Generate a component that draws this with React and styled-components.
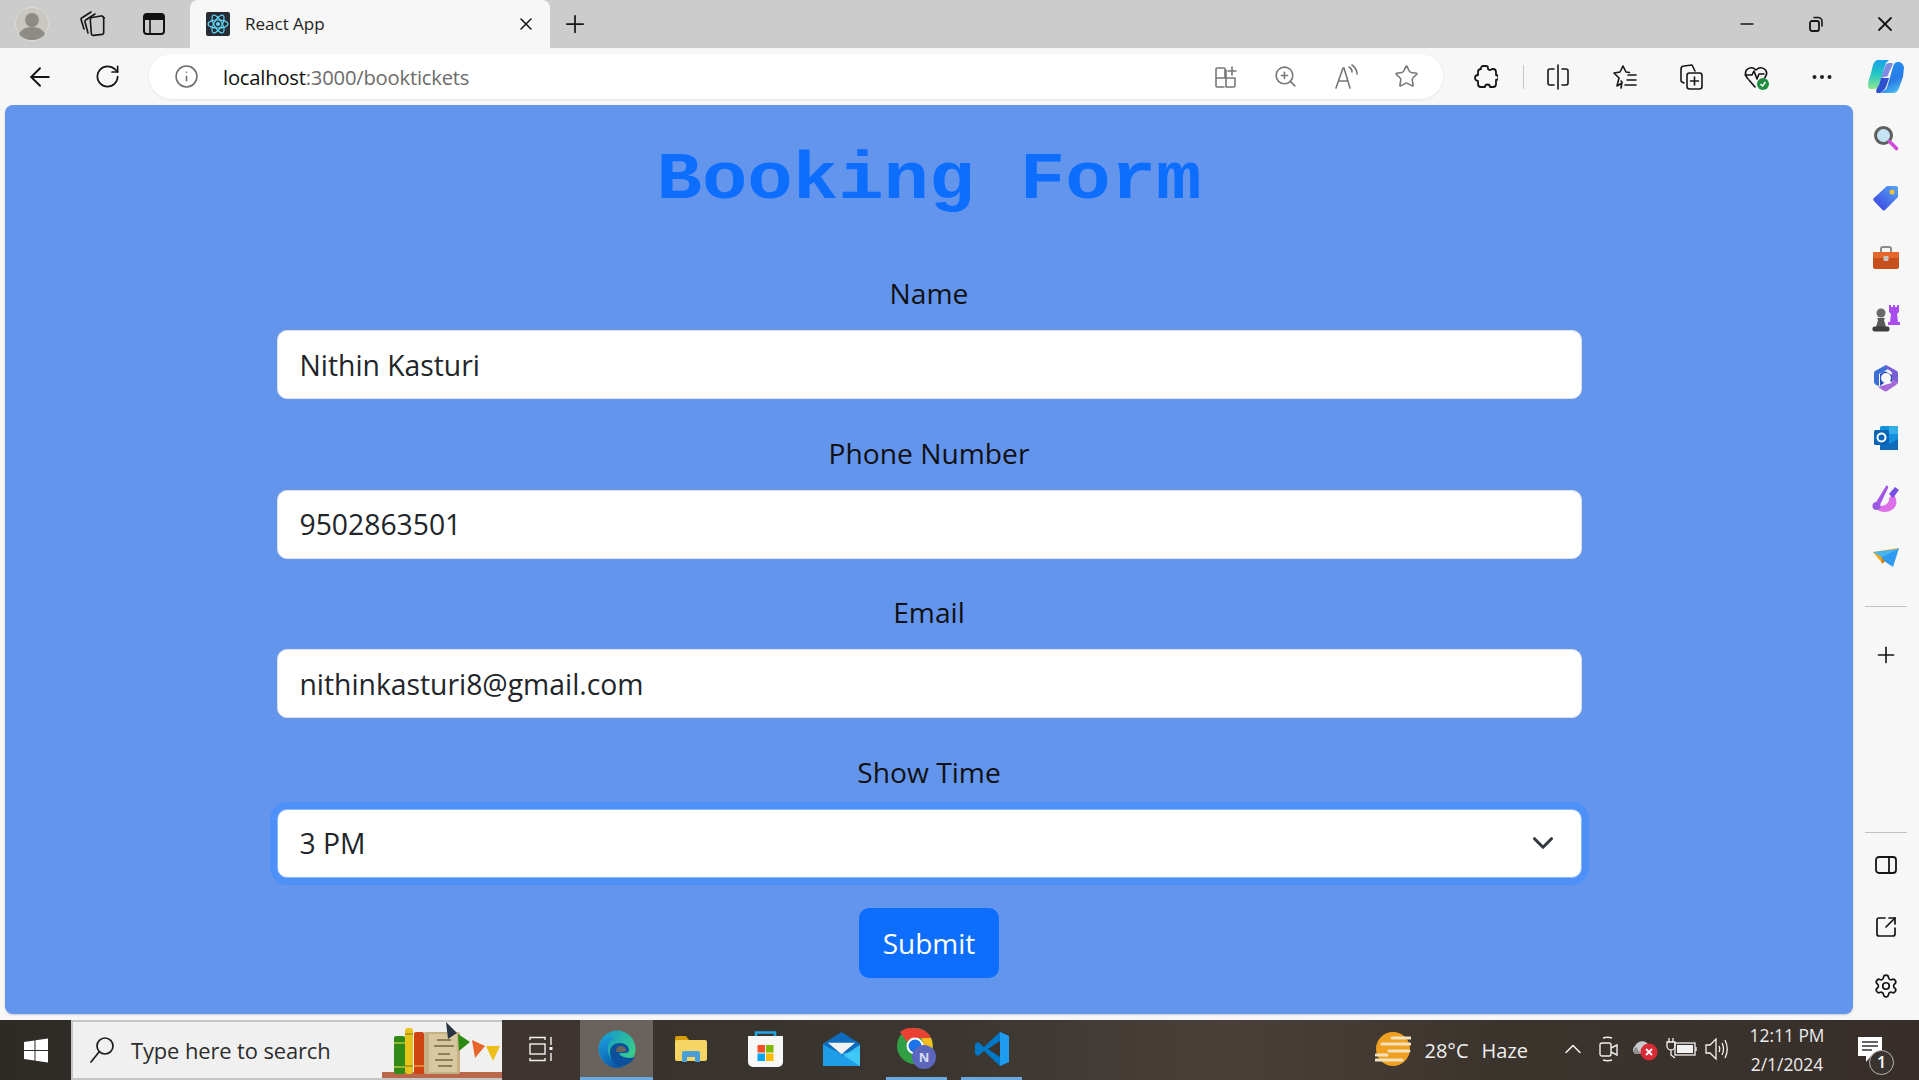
import React from 'react'
import styled, { createGlobalStyle } from 'styled-components'
import {
  ArrowLeft, RotateCw, Info, Plus, X, Minus, ZoomIn, Star, Settings, ChevronUp,
  ChevronDown, SquareArrowOutUpRight,
} from 'lucide-react'

const UI_FONT = '"Open Sans", "Noto Sans", "Liberation Sans", sans-serif'

const GlobalStyle = createGlobalStyle`
  html, body {
    margin: 0;
    padding: 0;
    background: #f7f7f7;
  }
  * {
    box-sizing: border-box;
  }
`

const Screen = styled.div`
  width: 1919px;
  height: 1080px;
  display: flex;
  flex-direction: column;
  overflow: hidden;
  font-family: ${UI_FONT};
`

const TabStrip = styled.div`
  height: 48px;
  flex: none;
  display: flex;
  align-items: stretch;
  background: #cccccc;
`

const Slot = styled.div`
  width: ${props => props.$w}px;
  flex: none;
  display: flex;
  align-items: center;
  justify-content: center;
  color: ${props => props.$color || '#161616'};
  margin-left: ${props => props.$ml || 0}px;
`

const Spacer = styled.div`
  flex: 1;
`

const Tab = styled.div`
  width: 360px;
  margin-left: 2px;
  flex: none;
  display: flex;
  align-items: center;
  background: #f7f7f7;
  border-radius: 8px 8px 0 0;
  padding: 0 14px 0 16px;
`

const TabTitle = styled.span`
  flex: 1;
  margin: 0 0 2px 15px;
  font-size: 17px;
  color: #222;
`

const Toolbar = styled.div`
  height: 57px;
  flex: none;
  display: flex;
  align-items: center;
  background: #f7f7f7;
`

const AddressBar = styled.div`
  width: 1294px;
  height: 45px;
  margin-left: 15px;
  flex: none;
  display: flex;
  align-items: center;
  background: #fff;
  border-radius: 23px;
  box-shadow: 0 1px 3px rgba(0, 0, 0, 0.08);
`

const Url = styled.span`
  font-size: 20.2px;
  color: #6b6b6b;
  letter-spacing: -0.2px;
  & > b {
    font-weight: 400;
    color: #111;
  }
`

const ToolbarRule = styled.div`
  width: 1px;
  height: 24px;
  margin-left: 7px;
  background: #c4c4c4;
`

const Body = styled.div`
  flex: 1;
  min-height: 0;
  display: flex;
  background: #f7f7f7;
`

const Page = styled.main`
  width: 1848px;
  margin: 0 0 6px 5px;
  flex: none;
  background: #6495ed;
  border-radius: 8px;
  box-shadow: 0 1px 2px rgba(0, 0, 0, 0.18);
  display: flex;
  flex-direction: column;
  align-items: center;
  padding-top: 27px;
`

const Title = styled.h1`
  margin: 0 0 48px;
  height: 92px;
  font-family: "Liberation Mono", "Courier New", monospace;
  font-size: 75.7px;
  line-height: 92px;
  font-weight: 700;
  color: #0d6efd;
  transform: scaleY(0.87);
  transform-origin: center 67px;
`

const Form = styled.form`
  width: 1305px;
  display: flex;
  flex-direction: column;
  align-items: center;
`

const Field = styled.div`
  width: 100%;
  margin-bottom: ${props => props.$mb || 32.5}px;
  position: relative;
`

const Label = styled.label`
  display: block;
  height: 43px;
  margin-bottom: 15px;
  font-size: 28.2px;
  line-height: 43px;
  text-align: center;
  color: #111;
`

const TextInput = styled.input`
  display: block;
  width: 100%;
  height: 69px;
  padding: 0 22px;
  border: 1px solid #dee2e6;
  border-radius: 10px;
  background: #fff;
  font-family: ${UI_FONT};
  font-size: 28.3px;
  color: #212529;
  outline: none;
`

const Select = styled.select`
  display: block;
  width: 100%;
  height: 69px;
  padding: 0 22px;
  border: 1px solid #86b7fe;
  border-radius: 10px;
  background: #fff;
  font-family: ${UI_FONT};
  font-size: 28.3px;
  color: #212529;
  appearance: none;
  outline: none;
  box-shadow: 0 0 0 7px #4d90f8;
`

const SelectArrow = styled(ChevronDown)`
  position: absolute;
  right: 22px;
  bottom: 18px;
  color: #343a40;
  pointer-events: none;
`

const SubmitButton = styled.button`
  width: 140px;
  height: 70px;
  border: none;
  border-radius: 10px;
  background: #0d6efd;
  color: #fff;
  font-family: ${UI_FONT};
  font-size: 28px;
`

const SideBar = styled.aside`
  flex: 1;
  display: flex;
  flex-direction: column;
  align-items: center;
  padding: 3px 0 5px;
`

const SideSlot = styled.div`
  width: 100%;
  height: ${props => props.$h || 60}px;
  flex: none;
  display: flex;
  align-items: center;
  justify-content: center;
  color: #161616;
`

const SideRule = styled.div`
  width: 42px;
  height: 1px;
  flex: none;
  background: #c2c2c2;
  margin: ${props => props.$m || '0'};
`

const Taskbar = styled.footer`
  height: 60px;
  flex: none;
  display: flex;
  align-items: stretch;
  padding-right: 21px;
  color: #f0f0f0;
  background: linear-gradient(90deg, #2e2b27 0, #38322d 30%, #3c3631 50%, #4a4039 64%, #3b342d 78%, #372e29 100%);
`

const StartButton = styled.div`
  width: 71px;
  flex: none;
  display: flex;
  align-items: center;
  justify-content: center;
`

const SearchBox = styled.div`
  width: 431px;
  flex: none;
  display: flex;
  align-items: center;
  background: #f0f0f0;
  border: 2px solid #c6c6c6;
  border-right: none;
  padding-left: 16px;
  overflow: hidden;
`

const SearchText = styled.span`
  margin-left: 16px;
  font-size: 21.9px;
  color: #2c2c2c;
  letter-spacing: -0.1px;
`

const Artwork = styled.svg`
  margin-left: auto;
  flex: none;
`

const TaskSlot = styled.div`
  width: ${props => props.$w || 75}px;
  margin-left: ${props => props.$ml || 0}px;
  flex: none;
  display: flex;
  align-items: center;
  justify-content: center;
  background: ${props => (props.$active ? '#6a625d' : props.$tint || 'transparent')};
  border-bottom: 3px solid ${props => (props.$open || props.$active ? '#6aa9e0' : 'transparent')};
`

const Weather = styled.span`
  font-size: 20px;
  margin-left: ${props => props.$ml || 0}px;
  white-space: nowrap;
  align-self: center;
`

const Clock = styled.div`
  width: 92px;
  margin-left: 6px;
  flex: none;
  display: flex;
  flex-direction: column;
  align-items: center;
  justify-content: center;
  font-size: 17.4px;
  line-height: 29px;
  color: #ececec;
  white-space: nowrap;
`

const Notify = styled.div`
  width: 56px;
  margin-left: 9px;
  position: relative;
  display: flex;
  align-items: center;
  justify-content: center;
`

const NotifyBadge = styled.span`
  position: absolute;
  left: 27px;
  top: 30px;
  width: 25px;
  height: 25px;
  border-radius: 50%;
  border: 1.5px solid #b5b5b5;
  background: #3a3430;
  color: #fff;
  font-size: 16px;
  font-weight: 600;
  line-height: 22px;
  text-align: center;
`

const line = { fill: 'none', stroke: 'currentColor', strokeWidth: 1.6, strokeLinecap: 'round', strokeLinejoin: 'round' }

const Avatar = () => (
  <svg width="34" height="34" viewBox="0 0 34 34">
    <circle cx="17" cy="17" r="16.5" fill="#c9c7c2" stroke="#dcdad6" />
    <circle cx="17" cy="13" r="7" fill="#8d8b86" />
    <path d="M4 27c3-6 8-7 13-7s10 1 13 7c-3 4-8 6-13 6s-10-2-13-6z" fill="#8d8b86" />
  </svg>
)

const TabsStack = () => (
  <svg width="26" height="28" viewBox="0 0 26 28" {...line}>
    <path d="M13 7.500l9-1.500a2 2 0 0 1 2.300 1.700l1.500 0M13 7.500a2 2 0 0 0-1.700 2l1 14a2 2 0 0 0 2.200 1.900l8.500-1a2 2 0 0 0 1.700-2.200V8a2 2 0 0 0-2.200-2" />
    <path d="M9 23L6 12a2 2 0 0 1 1.500-2.500L16 4" />
    <path d="M5 19L2.200 10a2 2 0 0 1 1.300-2.500L12 2" />
  </svg>
)

const VerticalTabs = () => (
  <svg width="24" height="24" viewBox="0 0 24 24">
    <rect x="2" y="2" width="20" height="20" rx="3" fill="none" stroke="#111" strokeWidth="2" />
    <path d="M2 5a3 3 0 0 1 3-3h14a3 3 0 0 1 3 3v3H2z" fill="#111" />
    <path d="M8 8v14" stroke="#111" strokeWidth="1.6" />
  </svg>
)

const ReactFavicon = () => (
  <svg width="24" height="24" viewBox="0 0 24 24">
    <rect width="24" height="24" rx="2" fill="#282c34" />
    <g fill="none" stroke="#61dafb" strokeWidth="1.2">
      <ellipse cx="12" cy="12" rx="10" ry="4" />
      <ellipse cx="12" cy="12" rx="10" ry="4" transform="rotate(60 12 12)" />
      <ellipse cx="12" cy="12" rx="10" ry="4" transform="rotate(120 12 12)" />
    </g>
    <circle cx="12" cy="12" r="2" fill="#61dafb" />
  </svg>
)

const RestoreIcon = () => (
  <svg width="16" height="18" viewBox="0 0 16 18" {...line}>
    <rect x="2" y="6" width="9" height="10" rx="2" strokeWidth="1.8" />
    <path d="M6 2.500h4a4 4 0 0 1 4 4V11" />
  </svg>
)

const AppsAdd = () => (
  <svg width="24" height="24" viewBox="0 0 24 24" {...line} stroke="#777">
    <path d="M13 5v17h8a1 1 0 0 0 1-1v-8H3M11 22H4a1 1 0 0 1-1-1V4a1 1 0 0 1 1-1h7a1 1 0 0 1 1 1v9" />
    <path d="M19 2v8M15 6h8" />
  </svg>
)

const ReadAloud = () => (
  <svg width="26" height="26" viewBox="0 0 26 26" {...line} stroke="#777">
    <path d="M3 24l7-20h1l6 20M6 17h9" />
    <path d="M16 3c2 1 3 3 3 5M19 1c3 2 5 5 5 9" />
  </svg>
)

const ExtensionIcon = () => (
  <svg width="24" height="26" viewBox="0 0 24 26" {...line} strokeWidth="1.8">
    <path d="M9 2h3a2 2 0 0 1 2 2v1a2.500 2.500 0 0 0 4 0h1a3 3 0 0 1 3 3v3a2.500 2.500 0 1 1 0 5v4a3 3 0 0 1-3 3h-3a2.500 2.500 0 0 0-5 0H7a3 3 0 0 1-3-3v-3a3 3 0 0 1 0-6V8a3 3 0 0 1 3-3a2.500 2.500 0 0 1 2-3z" />
  </svg>
)

const SplitIcon = () => (
  <svg width="24" height="26" viewBox="0 0 24 26" {...line}>
    <path d="M8 5H4a2 2 0 0 0-2 2v12a2 2 0 0 0 2 2h4M16 5h4a2 2 0 0 1 2 2v12a2 2 0 0 1-2 2h-4" />
    <path d="M12 1v24" />
  </svg>
)

const FavoritesIcon = () => (
  <svg width="26" height="26" viewBox="0 0 26 26" {...line}>
    <path d="M11 2l3 6 3.500.5M9 24l1-6-1-1M11 2L8 8l-6 1 5 5-2 8 5-3" />
    <path d="M16 11h8M15 16h9M13 21h11" />
  </svg>
)

const CollectionsIcon = () => (
  <svg width="26" height="28" viewBox="0 0 26 28" {...line}>
    <rect x="9" y="10" width="15" height="16" rx="2.500" />
    <path d="M16.500 14v8M12.500 18h8" />
    <path d="M6 20l-2-1a2 2 0 0 1-1-2V6a3 3 0 0 1 3-3l8-1 3 6" />
  </svg>
)

const HealthIcon = () => (
  <svg width="28" height="28" viewBox="0 0 28 28">
    <path d="M5 16C2 13 2 9 3.500 7c2.500-3 6.500-3 9.500 0 3-3 7-3 9.500 0 1.500 2 1.500 5-1 8M2 12h7l2-4 3 8 2-5h5M6 17l6 7" fill="none" stroke="#111" strokeWidth="1.6" strokeLinejoin="round" strokeLinecap="round" />
    <circle cx="20" cy="21" r="6" fill="#1e8e3e" />
    <path d="M17.500 21l2 2 3-4" fill="none" stroke="#fff" strokeWidth="1.5" />
  </svg>
)

const MoreIcon = () => (
  <svg width="22" height="6" viewBox="0 0 22 6" fill="#222">
    <circle cx="3.500" cy="3" r="2" />
    <circle cx="11" cy="3" r="2" />
    <circle cx="18.500" cy="3" r="2" />
  </svg>
)

const Copilot = () => (
  <svg width="36" height="33" viewBox="0 0 36 33">
    <defs>
      <linearGradient id="copA" x1="0.300" y1="0" x2="0.300" y2="1">
        <stop offset="0" stopColor="#1aa0ea" />
        <stop offset="0.5" stopColor="#25c8c4" />
        <stop offset="1" stopColor="#90e48e" />
      </linearGradient>
      <linearGradient id="copB" x1="0.300" y1="0" x2="0.700" y2="1">
        <stop offset="0" stopColor="#1f90ee" />
        <stop offset="0.6" stopColor="#2a7be6" />
        <stop offset="1" stopColor="#4cc0f4" />
      </linearGradient>
    </defs>
    <path d="M10 0h11l-3 3-7 22c-1 3-3 4-6 4H3c-2 0-3-1-3-4 0-4 2-8 3-12l2-8c1-3 3-5 5-5z" fill="url(#copA)" />
    <path d="M25 33H12l5-3c2-2 2-3 3-6l5-17c1-4 3-5 5-5h1c2 0 4 2 5 5l-1 10-4 11c-1 3-3 5-6 5z" fill="url(#copB)" />
    <path d="M11 25l2-7h8l-2 6c-1 3-2 5-3 6l-4 3h-3c-2-2 0-5 2-8z" fill="#2f50cf" />
    <path d="M21 3h3c1 0 1 1 0 3-1 3-3 5-4 10l-7 2 4-11c1-3 2-4 4-4z" fill="#5f6fe0" opacity="0.8" />
  </svg>
)

const SideSearch = () => (
  <svg width="26" height="26" viewBox="0 0 26 26">
    <circle cx="10.500" cy="10.500" r="8" fill="#c4e4f6" stroke="#5f5f5f" strokeWidth="3" />
    <path d="M16.500 16.500l7 7" stroke="#d14ad6" strokeWidth="3.600" strokeLinecap="round" />
  </svg>
)

const SideTag = () => (
  <svg width="26" height="26" viewBox="0 0 26 26">
    <defs>
      <linearGradient id="tagG" x1="1" y1="0" x2="0" y2="1">
        <stop offset="0" stopColor="#55a5f5" />
        <stop offset="1" stopColor="#3a3fe0" />
      </linearGradient>
    </defs>
    <path d="M14 1h9a2 2 0 0 1 2 2v9L12 25a2 2 0 0 1-2.500 0L1 16a2 2 0 0 1 0-3z" fill="url(#tagG)" />
    <circle cx="19" cy="7" r="2.500" fill="#f4c430" />
  </svg>
)

const SideToolbox = () => (
  <svg width="28" height="24" viewBox="0 0 28 24">
    <path d="M9 7V3a2 2 0 0 1 2-2h6a2 2 0 0 1 2 2v4" fill="none" stroke="#8a8a8a" strokeWidth="2" />
    <rect x="1" y="6" width="26" height="17" rx="2" fill="#c8501f" />
    <rect x="1" y="6" width="26" height="6" rx="1" fill="#e2672a" />
    <rect x="11.500" y="10" width="5" height="5" rx="1" fill="#c9c2bc" />
  </svg>
)

const SideChess = () => (
  <svg width="28" height="28" viewBox="0 0 28 28">
    <path d="M17 1h2v2h2V1h2v2h2V1h2v7l-2 2 1 8h2v3H16v-3h2l1-8-2-2z" fill="#a94df0" />
    <circle cx="9" cy="9" r="4.500" fill="#6a6a6a" />
    <path d="M5 14h8l-1 2 2 7H4l2-7z" fill="#5a5a5a" />
    <rect x="0.500" y="22.500" width="17" height="5" rx="2" fill="#3e3e3e" />
  </svg>
)

const SideM365 = () => (
  <svg width="26" height="28" viewBox="0 0 26 28">
    <path d="M13 1L2 7c-1 1-1 2-1 3v8c0 1 1 2 2 3l3 1V10l11-6z" fill="#3b6fd6" />
    <path d="M13 1l11 6c1 1 1 2 1 3v9l-6 3V10c0-2-1-3-3-4l-3-2z" fill="#7a5cd6" />
    <path d="M25 18c0 1-1 2-2 3l-9 6c-1 .500-2 .500-3 0l-6-4 10-3c2 0 3-1 4-2v-3z" fill="#a66ad8" />
    <path d="M7 22V10l3-2c2-1 4 0 5 1l4 2v7l-4-2v-3l-2-1-2 1v6z" fill="#2b4fb8" />
    <circle cx="13" cy="14" r="5" fill="#f7f7f7" />
  </svg>
)

const SideOutlook = () => (
  <svg width="26" height="26" viewBox="0 0 26 26">
    <rect x="7" y="1" width="18" height="24" rx="1.500" fill="#1490df" />
    <path d="M16 1h9v8h-9z" fill="#33aee8" />
    <path d="M7 14l9 5 9-5v11H7z" fill="#0f6cbd" />
    <rect x="1" y="5" width="15" height="15" rx="1.500" fill="#0a64b8" />
    <circle cx="8.500" cy="12.500" r="4" fill="none" stroke="#fff" strokeWidth="2" />
  </svg>
)

const SideDesigner = () => (
  <svg width="28" height="30" viewBox="0 0 28 30">
    <path d="M3 24c4 7 17 7 21-2 1-4 0-8-3-11l-4 4c1 5-4 8-9 8z" fill="#dd70e8" />
    <path d="M3 21L14 3c1-1 3 0 2 2L7 24z" fill="#a257e8" />
    <circle cx="4.500" cy="23" r="4" fill="#9a5be0" />
    <path d="M17 11l6-7 4 3-6 8z" fill="#7a4fe6" />
  </svg>
)

const SideSend = () => (
  <svg width="28" height="20" viewBox="0 0 28 20">
    <path d="M1 4L27 0 9 9l1 6z" fill="#f0a818" />
    <path d="M27 0L9 9l3 4 9 6z" fill="#2f9bf0" />
    <path d="M1 4l9 5 16-8z" fill="#46b4f5" />
    <path d="M9 9l1 7 3-3z" fill="#c57a10" />
  </svg>
)

const SidePanel = () => (
  <svg width="24" height="20" viewBox="0 0 24 20" {...line} strokeWidth="1.8">
    <rect x="2" y="2" width="20" height="16" rx="3" />
    <path d="M15 2v16" />
  </svg>
)

const StartLogo = () => (
  <svg width="24" height="25" viewBox="0 0 24 25" fill="#fff">
    <path d="M0 4l10.500-1.500v9.500H0zM11.500 2.300L24 .5V12H11.500zM0 13h10.500v9.500L0 21zM11.500 13H24v11.500l-12.500-1.800z" />
  </svg>
)

const SearchGlass = () => (
  <svg width="26" height="28" viewBox="0 0 26 28" fill="none" stroke="#1c1c1c" strokeWidth="1.700">
    <circle cx="16" cy="10" r="8" />
    <path d="M10 16L2 26" strokeLinecap="round" />
  </svg>
)

const Bookshelf = () => (
  <Artwork width="120" height="56" viewBox="0 0 120 56">
    <rect x="0" y="50" width="120" height="6" fill="#b9694a" />
    <rect x="12" y="14" width="11" height="38" rx="2" fill="#2f8a16" />
    <path d="M12 21h11M12 45h11" stroke="#b8c83a" strokeWidth="1.500" />
    <rect x="23" y="6" width="8" height="46" rx="3" fill="#e8c41a" />
    <path d="M23 12h8M23 44h8" stroke="#a88c10" strokeWidth="1.500" />
    <rect x="32" y="10" width="10" height="42" rx="2" fill="#cf4212" />
    <path d="M32 44h10" stroke="#e8a040" strokeWidth="1.500" />
    <rect x="42" y="10" width="36" height="42" rx="2" fill="#c7b083" />
    <rect x="47" y="12" width="28" height="38" fill="#d9c79f" />
    <path d="M55 18h14M52 24h20M56 32h12M53 38h18M56 44h14" stroke="#8f7c59" strokeWidth="2" />
    <path d="M64 0l11 11-9 6z" fill="#2a3440" />
    <path d="M76 12l12 8-11 9z" fill="#2c8a12" />
    <path d="M90 18l13 6-10 12z" fill="#e8652a" />
    <path d="M104 24h14l-7 15z" fill="#ecc018" />
  </Artwork>
)

const TaskView = () => (
  <svg width="24" height="26" viewBox="0 0 24 26" fill="none" stroke="#f2f2f2" strokeWidth="1.400">
    <path d="M1 4V1.500h15V4M1 22v2.500h15V22" />
    <rect x="1" y="8" width="15" height="10" />
    <path d="M22 1v8M22 17v8" />
    <rect x="20.500" y="11" width="3" height="3" fill="#f2f2f2" stroke="none" />
  </svg>
)

const EdgeIcon = () => (
  <svg width="38" height="38" viewBox="0 0 38 38">
    <defs>
      <linearGradient id="edgeA" x1="0" y1="0" x2="1" y2="0.600">
        <stop offset="0" stopColor="#0f8fd8" />
        <stop offset="1" stopColor="#38d08a" />
      </linearGradient>
      <linearGradient id="edgeB" x1="0" y1="0" x2="0.500" y2="1">
        <stop offset="0" stopColor="#1a9ee0" />
        <stop offset="1" stopColor="#0b5aa8" />
      </linearGradient>
    </defs>
    <circle cx="19" cy="19" r="18.500" fill="url(#edgeA)" />
    <path d="M1 18C2 10 10 6 17 8c-7 2-9 9-6 17 2 6 9 11 17 10-3 2-6 3-9 3C9 38 1 29 1 18z" fill="url(#edgeB)" />
    <path d="M12 22c0-6 5-9 10-9 6 0 9 4 9 7 0 3-3 3-6 3h-3c-1 0-1 1 0 2 2 2 6 3 10 3l5-1c-3 5-8 9-14 9-7 0-11-7-11-14z" fill="#0c4f9a" />
    <path d="M18 21c0-3 2-5 5-5s5 2 5 4-2 2-3 2h-5c-1 0-2 0-2-1z" fill="#6a625d" />
  </svg>
)

const FolderIcon = () => (
  <svg width="32" height="28" viewBox="0 0 32 28">
    <path d="M0 3a2 2 0 0 1 2-2h9l3 4v5H0z" fill="#d79b08" />
    <rect x="0" y="5" width="32" height="21" rx="2" fill="#f7d565" />
    <path d="M7 27V18a2 2 0 0 1 2-2h14a2 2 0 0 1 2 2v9h-5v-5h-8v5z" fill="#4a9ed8" />
  </svg>
)

const StoreIcon = () => (
  <svg width="35" height="36" viewBox="0 0 35 36">
    <path d="M8 6V1.500h19V6" fill="none" stroke="#1ea7e8" strokeWidth="2.500" />
    <path d="M0 5h35v26a5 5 0 0 1-5 5H5a5 5 0 0 1-5-5z" fill="#f7f7f7" />
    <rect x="9.500" y="14" width="7.500" height="7.500" fill="#f25022" />
    <rect x="18" y="14" width="7.500" height="7.500" fill="#7fba00" />
    <rect x="9.500" y="22.500" width="7.500" height="7.500" fill="#00a4ef" />
    <rect x="18" y="22.500" width="7.500" height="7.500" fill="#ffb900" />
  </svg>
)

const MailIcon = () => (
  <svg width="37" height="34" viewBox="0 0 38 35">
    <path d="M0 12L19 0l19 12v2L19 26 0 14z" fill="#0f6cbd" />
    <path d="M5 11h28l-14 12z" fill="#f2f2f2" />
    <path d="M0 13l19 13 19-13v22H0z" fill="#37c0f5" />
    <path d="M0 13v22h38L19 23z" fill="#1e9ee8" />
    <path d="M19 22l19 13V20z" fill="#45cdf8" opacity="0.7" />
  </svg>
)

const ChromeIcon = () => (
  <svg width="40" height="42" viewBox="0 0 40 42">
    <circle cx="18" cy="18" r="18" fill="#2f9e44" />
    <path d="M18 0a18 18 0 0 1 16 10H18a8 8 0 0 0-8 4L3 4a18 18 0 0 1 15-4z" fill="#e94235" />
    <path d="M34 10a18 18 0 0 1-9 24l-7-11a8 8 0 0 0 6-13z" fill="#f6bd20" />
    <circle cx="18" cy="18" r="8.500" fill="#fff" />
    <circle cx="18" cy="18" r="6.500" fill="#1a73e8" />
    <circle cx="27" cy="29" r="12" fill="#5a67bd" />
    <text x="27" y="34" textAnchor="middle" fontSize="13" fontWeight="700" fontFamily="Open Sans, sans-serif" fill="#d9dcf2">N</text>
  </svg>
)

const VsCodeIcon = () => (
  <svg width="36" height="36" viewBox="0 0 36 36">
    <path d="M26 1l9 4v26l-9 4L10 20 4 25l-3-2v-10l3-2 6 5z" fill="#0078c8" />
    <path d="M26 1l9 4v26l-9 4z" fill="#1f9cf0" />
    <path d="M26 10L14 18l12 8z" fill="#3a332d" />
  </svg>
)

const WeatherIcon = () => (
  <svg width="36" height="36" viewBox="0 0 36 36">
    <circle cx="18" cy="18" r="17" fill="#f0a020" />
    <path d="M17 7h18M7 13h28M14 20h20M1 24h11M1 29h26" stroke="#f3e2bd" strokeWidth="3" strokeLinecap="round" />
  </svg>
)

const MeetIcon = () => (
  <svg width="20" height="28" viewBox="0 0 20 28" fill="none" stroke="#eee" strokeWidth="1.400">
    <rect x="1" y="8" width="11" height="13" rx="2" />
    <path d="M12 13l6-3v10l-6-3M4 3c3-1 6-1 9 0M4 25c3 1 6 1 9 0" />
  </svg>
)

const CloudOff = () => (
  <svg width="26" height="24" viewBox="0 0 26 24">
    <path d="M3 17a5 5 0 0 1 0-8c2-5 9-6 12-3l4 4-5 7z" fill="#c9c9c9" />
    <path d="M3 17c-2-3-1-6 2-7 0 3 2 5 6 7z" fill="#8e8e8e" />
    <circle cx="17" cy="15" r="8.500" fill="#d92b36" />
    <path d="M14 12l6 6M20 12l-6 6" stroke="#fff" strokeWidth="1.800" />
  </svg>
)

const BatteryIcon = () => (
  <svg width="32" height="24" viewBox="0 0 32 24" fill="none" stroke="#f2f2f2" strokeWidth="1.300">
    <path d="M4 1v4M8 1v4M2 5h8v4a4 4 0 0 1-8 0zM6 13v5l4 3" />
    <rect x="10" y="6" width="20" height="12" />
    <rect x="12" y="8" width="16" height="8" fill="#f2f2f2" stroke="none" />
    <path d="M31 10v4" />
  </svg>
)

const VolumeIcon = () => (
  <svg width="24" height="24" viewBox="0 0 24 24" fill="none" stroke="#f2f2f2" strokeWidth="1.300">
    <path d="M1 8v8h4l6 6V2L5 8z" />
    <path d="M14 9c1 2 1 4 0 6M17 6c2 4 2 8 0 12M20 3c3 6 3 12 0 18" />
  </svg>
)

const NotifyBubble = () => (
  <svg width="24" height="26" viewBox="0 0 24 26">
    <path d="M0 0h24v19H13l-5 6v-6H0z" fill="#fff" />
    <path d="M4 5h16M4 9h16M4 13h10" stroke="#333" strokeWidth="1.400" />
  </svg>
)

const SIDE_APPS = [SideSearch, SideTag, SideToolbox, SideChess, SideM365, SideOutlook, SideDesigner, SideSend]

const FIELDS = [
  { label: 'Name', value: 'Nithin Kasturi', type: 'text' },
  { label: 'Phone Number', value: '9502863501', type: 'tel' },
  { label: 'Email', value: 'nithinkasturi8@gmail.com', type: 'email' },
]

const App = () => (
  <Screen>
    <GlobalStyle />

    <TabStrip>
      <Slot $w={64}><Avatar /></Slot>
      <Slot $w={56}><TabsStack /></Slot>
      <Slot $w={68}><VerticalTabs /></Slot>
      <Tab>
        <ReactFavicon />
        <TabTitle>React App</TabTitle>
        <X size={20} strokeWidth={1.8} color="#111" />
      </Tab>
      <Slot $w={50}><Plus size={28} strokeWidth={1.5} /></Slot>
      <Spacer />
      <Slot $w={68}><Minus size={20} strokeWidth={2} /></Slot>
      <Slot $w={70}><RestoreIcon /></Slot>
      <Slot $w={68}><X size={24} strokeWidth={1.8} /></Slot>
    </TabStrip>

    <Toolbar>
      <Slot $w={80}><ArrowLeft size={30} strokeWidth={1.5} /></Slot>
      <Slot $w={54}><RotateCw size={27} strokeWidth={1.5} /></Slot>
      <AddressBar>
        <Slot $w={74} $color="#6e6e6e"><Info size={25} strokeWidth={1.5} /></Slot>
        <Url><b>localhost</b>:3000/booktickets</Url>
        <Spacer />
        <Slot $w={60}><AppsAdd /></Slot>
        <Slot $w={61} $color="#777"><ZoomIn size={25} strokeWidth={1.5} /></Slot>
        <Slot $w={60}><ReadAloud /></Slot>
        <Slot $w={60} $color="#777"><Star size={25} strokeWidth={1.5} /></Slot>
        <Slot $w={7} />
      </AddressBar>
      <Slot $w={60} $ml={13}><ExtensionIcon /></Slot>
      <ToolbarRule />
      <Slot $w={68}><SplitIcon /></Slot>
      <Slot $w={66}><FavoritesIcon /></Slot>
      <Slot $w={66}><CollectionsIcon /></Slot>
      <Slot $w={66}><HealthIcon /></Slot>
      <Slot $w={64}><MoreIcon /></Slot>
      <Slot $w={64}><Copilot /></Slot>
    </Toolbar>

    <Body>
      <Page>
        <Title>Booking Form</Title>
        <Form>
          {FIELDS.map(field => (
            <Field key={field.label}>
              <Label>{field.label}</Label>
              <TextInput type={field.type} value={field.value} readOnly />
            </Field>
          ))}
          <Field $mb={30.5}>
            <Label>Show Time</Label>
            <Select defaultValue="3 PM">
              <option>3 PM</option>
              <option>6 PM</option>
              <option>9 PM</option>
            </Select>
            <SelectArrow size={34} strokeWidth={2.2} />
          </Field>
          <SubmitButton type="button">Submit</SubmitButton>
        </Form>
      </Page>

      <SideBar>
        {SIDE_APPS.map((Icon, i) => (
          <SideSlot key={i}><Icon /></SideSlot>
        ))}
        <SideRule $m="18px 0 0" />
        <SideSlot $h={96}><Plus size={26} strokeWidth={1.5} /></SideSlot>
        <Spacer />
        <SideRule />
        <SideSlot $h={64}><SidePanel /></SideSlot>
        <SideSlot><SquareArrowOutUpRight size={24} strokeWidth={1.7} /></SideSlot>
        <SideSlot $h={58}><Settings size={26} strokeWidth={1.6} /></SideSlot>
      </SideBar>
    </Body>

    <Taskbar>
      <StartButton><StartLogo /></StartButton>
      <SearchBox>
        <SearchGlass />
        <SearchText>Type here to search</SearchText>
        <Bookshelf />
      </SearchBox>
      <TaskSlot $w={78} $tint="#3e3530"><TaskView /></TaskSlot>
      <TaskSlot $w={73} $active><EdgeIcon /></TaskSlot>
      <TaskSlot><FolderIcon /></TaskSlot>
      <TaskSlot><StoreIcon /></TaskSlot>
      <TaskSlot $w={76}><MailIcon /></TaskSlot>
      <TaskSlot $w={61} $ml={7} $open><ChromeIcon /></TaskSlot>
      <TaskSlot $w={61} $ml={14} $open><VsCodeIcon /></TaskSlot>
      <Spacer />
      <TaskSlot $w={44}><WeatherIcon /></TaskSlot>
      <Weather $ml={9}>28°C</Weather>
      <Weather $ml={13}>Haze</Weather>
      <TaskSlot $w={30} $ml={30}><ChevronUp size={28} strokeWidth={1.3} color="#f2f2f2" /></TaskSlot>
      <TaskSlot $w={36} $ml={3}><MeetIcon /></TaskSlot>
      <TaskSlot $w={36}><CloudOff /></TaskSlot>
      <TaskSlot $w={36}><BatteryIcon /></TaskSlot>
      <TaskSlot $w={36}><VolumeIcon /></TaskSlot>
      <Clock>
        <span>12:11 PM</span>
        <span>2/1/2024</span>
      </Clock>
      <Notify>
        <NotifyBubble />
        <NotifyBadge>1</NotifyBadge>
      </Notify>
    </Taskbar>
  </Screen>
)

export default App
